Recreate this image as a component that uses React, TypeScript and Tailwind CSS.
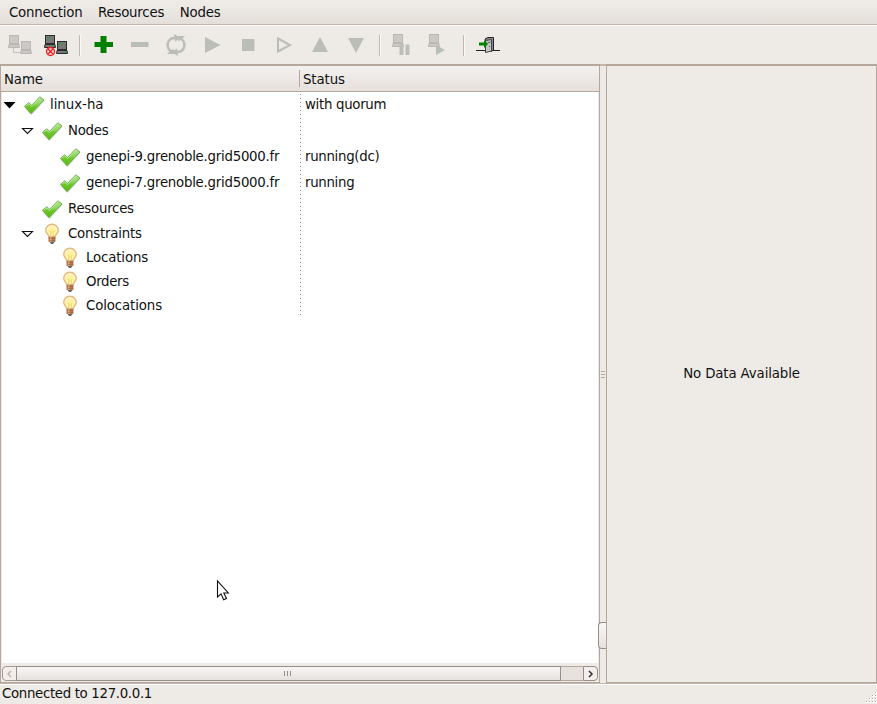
import React from "react";

type Kids = { children?: React.ReactNode };

function Slot({ children }: Kids) {
  return (
    <div className="flex h-6 w-9 shrink-0 items-center justify-center">
      <svg width="24" height="24" viewBox="0 0 24 24">
        {children}
      </svg>
    </div>
  );
}

function Separator() {
  return (
    <div className="flex h-6 w-3 shrink-0 items-center">
      <div className="ml-[5px] h-[21px] w-px bg-[#c3b5aa]" />
      <div className="h-[21px] w-px bg-[#fbfaf9]" />
    </div>
  );
}

function Computer({ x, y, off }: { x: number; y: number; off?: boolean }) {
  const line = off ? "#bab7b4" : "#2c2c2c";
  const face = off ? "#cbc9c6" : "#777977";
  return (
    <g transform={`translate(${x} ${y})`}>
      <rect x="1.500" y="0.500" width="9" height="8" fill={face} stroke={line} />
      {!off && <path d="M3 2h3v1H4v1H3z" fill="#2f9a3d" />}
      <rect x="3" y="9" width="6" height="1" fill={line} />
      <path d="M1 9.500h10l.5 3H.5z" fill={face} stroke={line} />
      {!off && <rect x="8" y="10" width="2" height="1" fill="#2f9a3d" />}
    </g>
  );
}

function Check() {
  return (
    <svg width="24" height="24" viewBox="0 0 24 24">
      <defs>
        <linearGradient id="leaf" x1="0" y1="0" x2="0" y2="1">
          <stop offset="0" stopColor="#b8e59a" />
          <stop offset="0.45" stopColor="#8bd45a" />
          <stop offset="0.55" stopColor="#6fc92c" />
          <stop offset="1" stopColor="#58b80c" />
        </linearGradient>
      </defs>
      <path d="M2.500 15l4-2 4 3.200L19.500 5l3 2.700L9.500 22z" fill="#777" opacity=".3" />
      <path
        d="M2.500 13.200L6.800 9.700 9.600 12.300 17.800 3.800 22 7 9 20.700z"
        fill="url(#leaf)"
        stroke="#6aab45"
        strokeWidth=".9"
        strokeLinejoin="round"
      />
      <path d="M3.700 13.200l3-2.400 2.900 2.700 8.400-8.700" fill="none" stroke="#d0f0b9" strokeWidth=".7" />
    </svg>
  );
}

function Bulb() {
  return (
    <svg width="24" height="24" viewBox="0 0 24 24">
      <defs>
        <radialGradient id="glow">
          <stop offset="0" stopColor="#fff27a" />
          <stop offset="0.6" stopColor="#fff3ad" />
          <stop offset="1" stopColor="#fffbe6" />
        </radialGradient>
      </defs>
      <path
        d="M12 2.300a6.100 6.100 0 0 0-6.200 6.200c0 3 3.400 4.300 3.700 7.500h5c.3-3.200 3.700-4.500 3.700-7.500A6.100 6.100 0 0 0 12 2.300z"
        fill="url(#glow)"
        stroke="#e5b87b"
        strokeWidth="1.400"
      />
      <path d="M10.800 15V10l-1.300-1.500M13.200 15V10l1.300-1.500" fill="none" stroke="#edc65a" strokeWidth=".7" />
      <rect x="8.500" y="14.500" width="7" height="5.500" rx=".7" fill="#b8794d" />
      <rect x="10" y="14.500" width="1.500" height="5.500" fill="#e2b48b" />
      <path d="M9 16.500h6M9 18.500h6" stroke="#8f5c3b" strokeWidth=".5" />
      <path d="M9.500 20h5L13 22h-2z" fill="#62656a" />
    </svg>
  );
}

function Expander({ kind }: { kind?: "solid" | "hollow" }) {
  return (
    <svg width="20" height="24" viewBox="0 0 20 24" className="shrink-0">
      {kind === "solid" && <path d="M1.500 9h12L7.500 15.500z" fill="#000" />}
      {kind === "hollow" && <path d="M2.500 9.500h10L7.500 14.500z" fill="#fff" stroke="#111" strokeWidth="1.100" />}
    </svg>
  );
}

type RowData = {
  label: string;
  status?: string;
  icon: "check" | "bulb";
  depth: number;
  kind?: "solid" | "hollow";
};

const rows: RowData[] = [
  { label: "linux-ha", status: "with quorum", icon: "check", depth: 0, kind: "solid" },
  { label: "Nodes", icon: "check", depth: 1, kind: "hollow" },
  { label: "genepi-9.grenoble.grid5000.fr", status: "running(dc)", icon: "check", depth: 2 },
  { label: "genepi-7.grenoble.grid5000.fr", status: "running", icon: "check", depth: 2 },
  { label: "Resources", icon: "check", depth: 1 },
  { label: "Constraints", icon: "bulb", depth: 1, kind: "hollow" },
  { label: "Locations", icon: "bulb", depth: 2 },
  { label: "Orders", icon: "bulb", depth: 2 },
  { label: "Colocations", icon: "bulb", depth: 2 },
];

const tracking: Record<string, string> = {
  "linux-ha": "tracking-[-0.02px]",
  Constraints: "tracking-[-0.22px]",
  Locations: "tracking-[-0.14px]",
  Orders: "tracking-[-0.35px]",
  Colocations: "tracking-[-0.12px]",
};

function TreeRow({ row }: { row: RowData }) {
  const pads = ["pl-0", "pl-[18px]", "pl-[36px]"];
  return (
    <div className={`flex shrink-0 ${row.icon === "check" ? "h-[26px]" : "h-6"}`}>
      <div className={`flex w-[298px] items-center ${pads[row.depth]}`}>
        <Expander kind={row.kind} />
        {row.icon === "check" ? <Check /> : <Bulb />}
        <span className={`ml-1 whitespace-nowrap ${tracking[row.label] ?? "tracking-[-0.25px]"}`}>{row.label}</span>
      </div>
      <div className="w-px" />
      <div className="flex items-center pl-1 tracking-[-0.3px]">{row.status}</div>
    </div>
  );
}

export default function App() {
  return (
    <div className="relative flex h-[704px] w-[877px] flex-col overflow-hidden bg-[#eeebe7] font-['DejaVu_Sans',sans-serif] text-[13.330px] leading-4 text-[#111]">
      <nav className="flex h-[25px] shrink-0 items-center gap-[15.500px] border-b border-[#c3b5aa] bg-linear-to-b from-[#efece8] to-[#e5dfda] pl-[9px] pt-px tracking-[-0.2px]">
        <span>Connection</span>
        <span>Resources</span>
        <span>Nodes</span>
      </nav>

      <div className="flex h-[39px] shrink-0 items-center border-t border-[#fbfaf9] pl-0.5">
        <Slot>
          <path d="M5.500 14v5.500H12" fill="none" stroke="#c3c0bd" />
          <Computer x={0} y={2} off />
          <Computer x={12} y={8} off />
        </Slot>
        <Slot>
          <Computer x={0} y={2} />
          <Computer x={12} y={8} />
          <circle cx="6.500" cy="18.500" r="4" fill="#f7dedb" stroke="#ef1d1d" strokeWidth="1.300" />
          <path d="M4 16l5 5M9 16l-5 5" stroke="#ef1d1d" strokeWidth="1.300" />
        </Slot>
        <Separator />
        <Slot>
          <path d="M8.500 3h6v6H21v5h-6.500v6h-6v-6H2.500V9h6z" fill="#008000" />
        </Slot>
        <Slot>
          <rect x="3" y="9" width="17.500" height="5" fill="#bbbdb7" />
        </Slot>
        <Slot>
          <g fill="none" stroke="#bbbdb7" strokeWidth="2.500">
            <path d="M8 19C2 15.500 2.500 8.500 7.500 5.500L13 4.500" />
            <path d="M16 5c6 3.500 5.500 10.500.5 13.500L11 19.500" />
          </g>
          <path d="M10 1l7 4-6 3.500zM14 23l-7-4 6-3.500zM9.500 15.500V21H3zM14.500 8.500V3H21z" fill="#bbbdb7" />
        </Slot>
        <Slot>
          <path d="M5 4l15.500 8L5 20z" fill="#bbbdb7" />
        </Slot>
        <Slot>
          <rect x="6" y="6" width="12.500" height="12" fill="#bbbdb7" />
        </Slot>
        <Slot>
          <path d="M6 5.500L18 12 6 18.500z" fill="none" stroke="#bbbdb7" strokeWidth="2" />
        </Slot>
        <Slot>
          <path d="M12 4l8 15H4z" fill="#bbbdb7" />
        </Slot>
        <Slot>
          <path d="M12 20l8-15H4z" fill="#bbbdb7" />
        </Slot>
        <Separator />
        <Slot>
          <Computer x={0} y={1} off />
          <path d="M7.500 11.500h4V22h-4zM13.500 11.500h4V22h-4z" fill="#bbbdb7" />
        </Slot>
        <Slot>
          <Computer x={0} y={1} off />
          <path d="M8 12l9 5-9 5z" fill="#bbbdb7" />
        </Slot>
        <Separator />
        <Slot>
          <path d="M0 17.500h9M17 17.500h7" stroke="#222" />
          <path d="M9 6l3-1.500h5.500V17L15 18.500V7.500H9.500z" fill="#8b8b8b" stroke="#222" />
          <path d="M9.500 7.500l6-1V18l-6 1.500z" fill="#c4c4c4" stroke="#444" />
          <path d="M11.500 10l3-1M13.500 13v1" stroke="#555" />
          <path d="M3 9.500h5V7l4 4-4 4v-2.500H3z" fill="#008000" />
        </Slot>
      </div>

      <div className="flex h-[619px] shrink-0">
        <section className="flex w-[600px] flex-col border border-t-2 border-[#b5a79b]">
          <header className="flex h-[26px] shrink-0 items-center border-b border-[#b5a79b] bg-linear-to-b from-[#f3f1ef] to-[#e6e0db] pl-[3px] tracking-[-0.1px]">
            <span className="w-[295px] pt-0.5">Name</span>
            <div className="h-[17px] w-px bg-[#b5a79b]" />
            <span className="pl-[3px] pt-0.5">Status</span>
          </header>
          <main className="mr-px flex grow flex-col border-l border-[#eeebe7] bg-white">
            <div className="flex flex-col bg-[repeating-linear-gradient(to_bottom,#fff_0px,#fff_2px,#8c8c8c_2px,#8c8c8c_3px,#fff_3px,#fff_4px)] bg-[length:1px_100%] bg-[position:298px_0px] bg-no-repeat">
              {rows.map((row) => (
                <TreeRow key={row.label} row={row} />
              ))}
            </div>
          </main>
          <div className="flex h-[19px] shrink-0 pl-px pr-px pt-[3px]">
            <div className="flex h-[15px] w-[15px] items-center justify-center rounded-l-sm border border-[#a39c94] bg-[#f1eeeb]">
              <svg width="7" height="8" viewBox="0 0 7 8">
                <path d="M5 1L2 4l3 3" fill="none" stroke="#b5afa7" strokeWidth="1.300" />
              </svg>
            </div>
            <div className="-ml-px flex h-[15px] w-[545px] items-center justify-center gap-0.5 border border-[#968f87] bg-linear-to-b from-[#f8f7f6] to-[#e6e1dd] pr-0.5">
              <div className="h-[5px] w-px bg-[#968f87]" />
              <div className="h-[5px] w-px bg-[#968f87]" />
              <div className="h-[5px] w-px bg-[#968f87]" />
            </div>
            <div className="h-[15px] grow border-y border-[#b5a79b] bg-[#e8e2de]" />
            <div className="flex h-[15px] w-[15px] items-center justify-center rounded-r-sm border border-[#968f87] bg-[#f1eeeb]">
              <svg width="7" height="8" viewBox="0 0 7 8">
                <path d="M2 1l3 3-3 3" fill="none" stroke="#333" strokeWidth="1.500" />
              </svg>
            </div>
          </div>
        </section>

        <div className="flex w-1.5 shrink-0 flex-col items-center justify-center gap-0.5 border-t-2 border-[#c3b5aa]">
          <div className="h-px w-1 bg-[#b5a79b]" />
          <div className="h-px w-1 bg-[#b5a79b]" />
          <div className="h-px w-1 bg-[#b5a79b]" />
        </div>

        <section className="flex grow items-center justify-center border border-t-2 border-[#b5a79b] pb-px tracking-[-0.12px]">
          No Data Available
        </section>
      </div>

      <div className="h-0.5 shrink-0 border-t border-[#c3b5aa] bg-white" />
      <footer className="flex grow items-start justify-between pl-0.5">
        <span className="pt-px tracking-[-0.33px]">Connected to 127.0.0.1</span>
        <svg width="12" height="12" viewBox="0 0 12 12" className="self-end">
          {[0, 1, 2, 3].map((r) =>
            Array.from({ length: r + 1 }, (_, c) => (
              <g key={`${r}-${c}`}>
                <rect x={10 - c * 3} y={r * 3} width="2" height="2" fill="#fff" />
                <rect x={10 - c * 3} y={r * 3} width="1" height="1" fill="#b5a79b" />
              </g>
            )),
          )}
        </svg>
      </footer>

      <div className="absolute left-[598px] top-[622px] h-[27px] w-2 rounded-l-sm border border-r-0 border-[#968f87] bg-linear-to-b from-[#f8f7f6] to-[#e6e1dd]" />
      <svg className="absolute left-[214px] top-[578px]" width="18" height="26" viewBox="0 0 18 26">
        <path
          d="M3.500 3v16l3.500-3.200 2.700 6 2.800-1.300-2.700-5.500h4.500z"
          fill="#fff"
          stroke="#111"
          strokeWidth="1.100"
        />
      </svg>
    </div>
  );
}
